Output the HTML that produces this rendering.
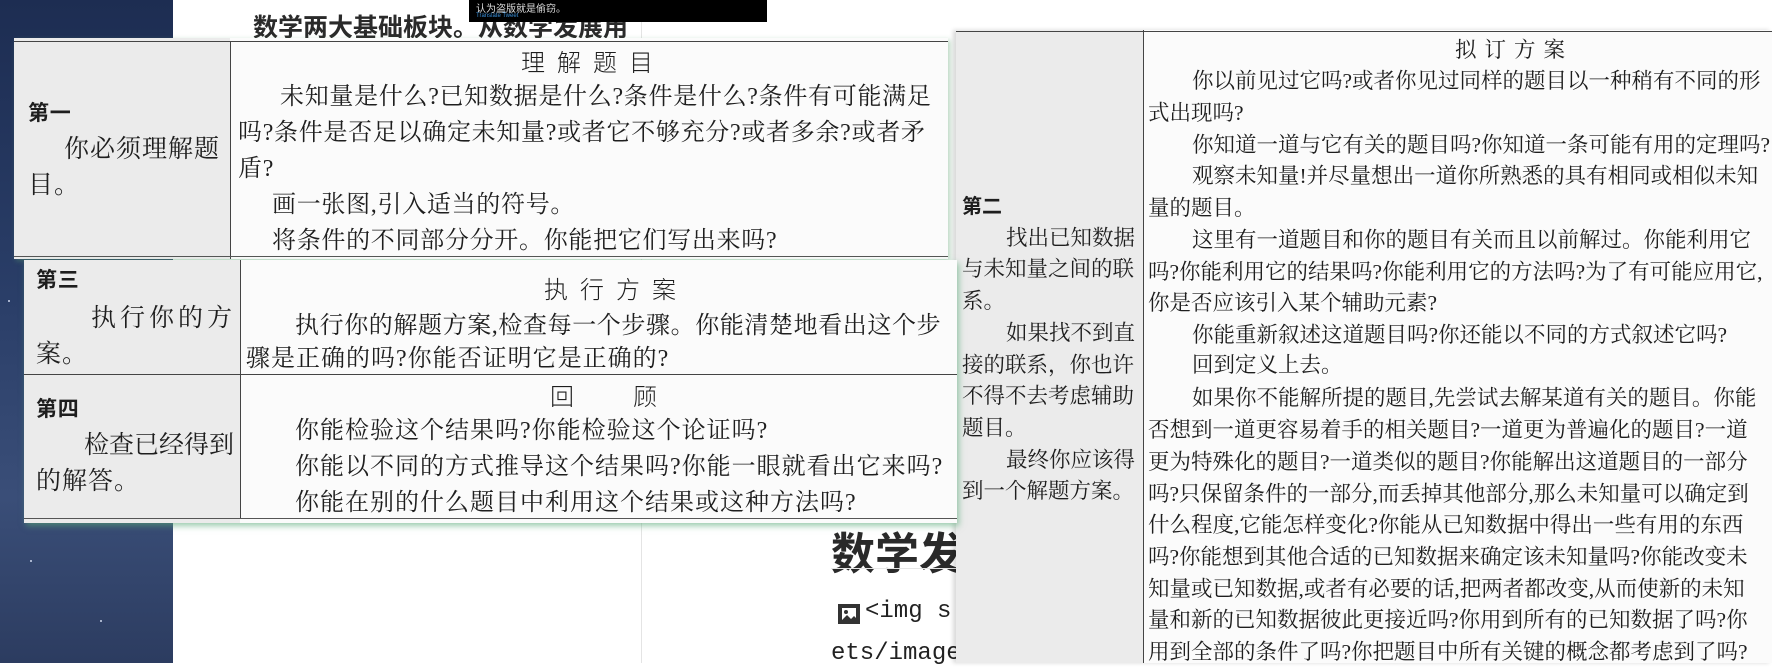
<!DOCTYPE html>
<html><head><meta charset="utf-8">
<style>
*{margin:0;padding:0;box-sizing:border-box}
body{width:1772px;height:663px;overflow:hidden;position:relative;background:#fff;font-family:"Liberation Serif","Noto Serif CJK SC",serif;color:#1e1e1e}
.a{position:absolute;white-space:nowrap}
.sky{position:absolute;left:0;top:0;width:173px;height:663px;background:linear-gradient(180deg,#1d2d52 0%,#2a3e68 45%,#3a4e78 75%,#2c3c60 100%)}
.star{position:absolute;width:2px;height:2px;background:#cfd8ee;border-radius:50%}
.p{position:absolute;background:#fbfbfb;overflow:hidden}
.lc{position:absolute;background:#ebebeb}
.t{font-size:24px;line-height:28px;letter-spacing:0.7px}
.t2{font-size:21.5px;line-height:26px}
.l{font-size:25px;line-height:28px;letter-spacing:1px}
.hb{font-family:"Liberation Sans","Noto Sans CJK SC",sans-serif;font-weight:bold}
</style></head><body>
<div class="sky">
<div class="star" style="left:20px;top:40px"></div><div class="star" style="left:90px;top:80px"></div>
<div class="star" style="left:140px;top:150px"></div><div class="star" style="left:40px;top:260px"></div>
<div class="star" style="left:120px;top:330px"></div><div class="star" style="left:60px;top:420px"></div>
<div class="star" style="left:150px;top:500px"></div><div class="star" style="left:30px;top:560px"></div>
<div class="star" style="left:100px;top:620px"></div><div class="star" style="left:8px;top:300px"></div>
</div>
<div class="a" style="left:641px;top:0;width:1px;height:663px;background:#e4e4e4"></div>
<div class="a hb" style="left:253px;top:8px;font-size:25px;color:#2a2a2a">数学两大基础板块。从数学发展用</div>
<div class="a" style="left:469px;top:0;width:298px;height:22px;background:#000"></div>
<div class="a" style="left:476px;top:0;font-size:10px;color:#ddd;font-family:'Liberation Sans','Noto Sans CJK SC',sans-serif">认为盗版就是偷窃。</div>
<div class="a" style="left:476px;top:13px;font-size:6px;color:#3a8fd8;font-family:'Liberation Sans',sans-serif">Translate Tweet</div>

<div class="a hb" style="left:831px;top:518px;font-size:44px;color:#2a2a2a">数学发</div>
<div class="a" style="left:831px;top:568px;width:130px;height:1px;background:#e6e6e6"></div>
<div class="a" style="left:838px;top:604px;width:22px;height:20px;background:#333;border:2px solid #333"><div style="position:absolute;left:2px;top:2px;width:14px;height:12px;background:#fff"></div><div style="position:absolute;left:4px;top:4px;width:4px;height:4px;background:#333;border-radius:50%"></div><svg style="position:absolute;left:0;top:6px" width="18" height="10"><path d="M0 10 L7 3 L11 7 L14 4 L18 8 L18 10Z" fill="#333"/></svg></div>
<div class="a" style="left:865px;top:598px;font-size:24px;font-family:'Liberation Mono',monospace;color:#222">&lt;img s</div>
<div class="a" style="left:831px;top:640px;font-size:24px;font-family:'Liberation Mono',monospace;color:#222">ets/image</div>

<!-- panel 2 -->
<div class="p" style="left:956px;top:30px;width:816px;height:633px;box-shadow:-3px 0 4px rgba(0,0,0,.15)">
<div class="lc" style="left:0;top:0;width:187px;height:634px"></div>
<div class="a" style="left:0;top:1px;width:816px;height:1px;background:#444"></div>
<div class="a" style="left:187px;top:0;width:1px;height:634px;background:#444"></div>
<div class="a t2" style="left:499px;top:7px;letter-spacing:8px">拟订方案</div>
<div class="t2 a" style="left:236px;top:38px">你以前见过它吗?或者你见过同样的题目以一种稍有不同的形</div>
<div class="t2 a" style="left:192px;top:70px">式出现吗?</div>
<div class="t2 a" style="left:236px;top:102px">你知道一道与它有关的题目吗?你知道一条可能有用的定理吗?</div>
<div class="t2 a" style="left:236px;top:133px">观察未知量!并尽量想出一道你所熟悉的具有相同或相似未知</div>
<div class="t2 a" style="left:192px;top:165px">量的题目。</div>
<div class="t2 a" style="left:236px;top:197px">这里有一道题目和你的题目有关而且以前解过。你能利用它</div>
<div class="t2 a" style="left:192px;top:229px">吗?你能利用它的结果吗?你能利用它的方法吗?为了有可能应用它,</div>
<div class="t2 a" style="left:192px;top:260px">你是否应该引入某个辅助元素?</div>
<div class="t2 a" style="left:236px;top:292px">你能重新叙述这道题目吗?你还能以不同的方式叙述它吗?</div>
<div class="t2 a" style="left:236px;top:322px">回到定义上去。</div>
<div class="t2 a" style="left:236px;top:355px">如果你不能解所提的题目,先尝试去解某道有关的题目。你能</div>
<div class="t2 a" style="left:192px;top:387px">否想到一道更容易着手的相关题目?一道更为普遍化的题目?一道</div>
<div class="t2 a" style="left:192px;top:419px">更为特殊化的题目?一道类似的题目?你能解出这道题目的一部分</div>
<div class="t2 a" style="left:192px;top:451px">吗?只保留条件的一部分,而丢掉其他部分,那么未知量可以确定到</div>
<div class="t2 a" style="left:192px;top:482px">什么程度,它能怎样变化?你能从已知数据中得出一些有用的东西</div>
<div class="t2 a" style="left:192px;top:514px">吗?你能想到其他合适的已知数据来确定该未知量吗?你能改变未</div>
<div class="t2 a" style="left:192px;top:546px">知量或已知数据,或者有必要的话,把两者都改变,从而使新的未知</div>
<div class="t2 a" style="left:192px;top:577px">量和新的已知数据彼此更接近吗?你用到所有的已知数据了吗?你</div>
<div class="t2 a" style="left:192px;top:609px">用到全部的条件了吗?你把题目中所有关键的概念都考虑到了吗?</div>
<div class="t2 a hb" style="left:6px;top:164px;font-size:20px">第二</div>
<div class="t2 a" style="left:50px;top:195px">找出已知数据</div>
<div class="t2 a" style="left:6px;top:226px">与未知量之间的联</div>
<div class="t2 a" style="left:6px;top:258px">系。</div>
<div class="t2 a" style="left:50px;top:290px">如果找不到直</div>
<div class="t2 a" style="left:6px;top:322px">接的联系，你也许</div>
<div class="t2 a" style="left:6px;top:353px">不得不去考虑辅助</div>
<div class="t2 a" style="left:6px;top:385px">题目。</div>
<div class="t2 a" style="left:50px;top:417px">最终你应该得</div>
<div class="t2 a" style="left:6px;top:448px">到一个解题方案。</div>
</div>

<!-- panel 1 -->
<div class="p" style="left:14px;top:38px;width:934px;height:221px;box-shadow:2px 2px 5px rgba(90,160,110,.45)">
<div class="lc" style="left:0;top:0;width:216px;height:221px"></div>
<div class="a" style="left:0;top:3px;width:934px;height:1px;background:#444"></div>
<div class="a" style="left:216px;top:3px;width:1px;height:218px;background:#444"></div>
<div class="a" style="left:0;top:218px;width:934px;height:1px;background:#555"></div>
<div class="a t" style="left:507px;top:9px;letter-spacing:12px;font-family:'Noto Sans CJK SC',sans-serif;font-weight:300">理解题目</div>
<div class="a t" style="left:266px;top:45px">未知量是什么?已知数据是什么?条件是什么?条件有可能满足</div>
<div class="a t" style="left:224px;top:81px">吗?条件是否足以确定未知量?或者它不够充分?或者多余?或者矛</div>
<div class="a t" style="left:224px;top:117px">盾?</div>
<div class="a t" style="left:258px;top:153px">画一张图,引入适当的符号。</div>
<div class="a t" style="left:258px;top:189px">将条件的不同部分分开。你能把它们写出来吗?</div>
<div class="a t hb" style="left:14px;top:62px;font-size:21px">第一</div>
<div class="a l" style="left:50px;top:98px">你必须理解题</div>
<div class="a l" style="left:14px;top:134px">目。</div>
</div>

<!-- panel 3 -->
<div class="p" style="left:24px;top:260px;width:933px;height:263px;box-shadow:2px 3px 6px rgba(90,170,120,.6)">
<div class="lc" style="left:0;top:0;width:216px;height:263px"></div>
<div class="a" style="left:216px;top:0;width:1px;height:259px;background:#444"></div>
<div class="a" style="left:0;top:114px;width:933px;height:1px;background:#444"></div>
<div class="a" style="left:0;top:258px;width:933px;height:1px;background:#555"></div>
<div class="a t" style="left:520px;top:14px;letter-spacing:12px;font-family:'Noto Sans CJK SC',sans-serif;font-weight:300">执行方案</div>
<div class="a t" style="left:271px;top:52px;letter-spacing:0.6px">执行你的解题方案,检查每一个步骤。你能清楚地看出这个步</div>
<div class="a t" style="left:222px;top:85px;letter-spacing:1px">骤是正确的吗?你能否证明它是正确的?</div>
<div class="a t hb" style="left:12px;top:7px;font-size:21px">第三</div>
<div class="a l" style="left:67px;top:45px;letter-spacing:4px">执行你的方</div>
<div class="a l" style="left:12px;top:81px">案。</div>
<div class="a t" style="left:526px;top:121px;font-family:'Noto Sans CJK SC',sans-serif;font-weight:300">回</div>
<div class="a t" style="left:609px;top:121px;font-family:'Noto Sans CJK SC',sans-serif;font-weight:300">顾</div>
<div class="a t" style="left:271px;top:157px;letter-spacing:1px">你能检验这个结果吗?你能检验这个论证吗?</div>
<div class="a t" style="left:271px;top:193px;letter-spacing:1px">你能以不同的方式推导这个结果吗?你能一眼就看出它来吗?</div>
<div class="a t" style="left:271px;top:229px;letter-spacing:1px">你能在别的什么题目中利用这个结果或这种方法吗?</div>
<div class="a t hb" style="left:12px;top:136px;font-size:21px">第四</div>
<div class="a l" style="left:60px;top:172px;letter-spacing:0">检查已经得到</div>
<div class="a l" style="left:12px;top:208px">的解答。</div>
</div>
</body></html>
